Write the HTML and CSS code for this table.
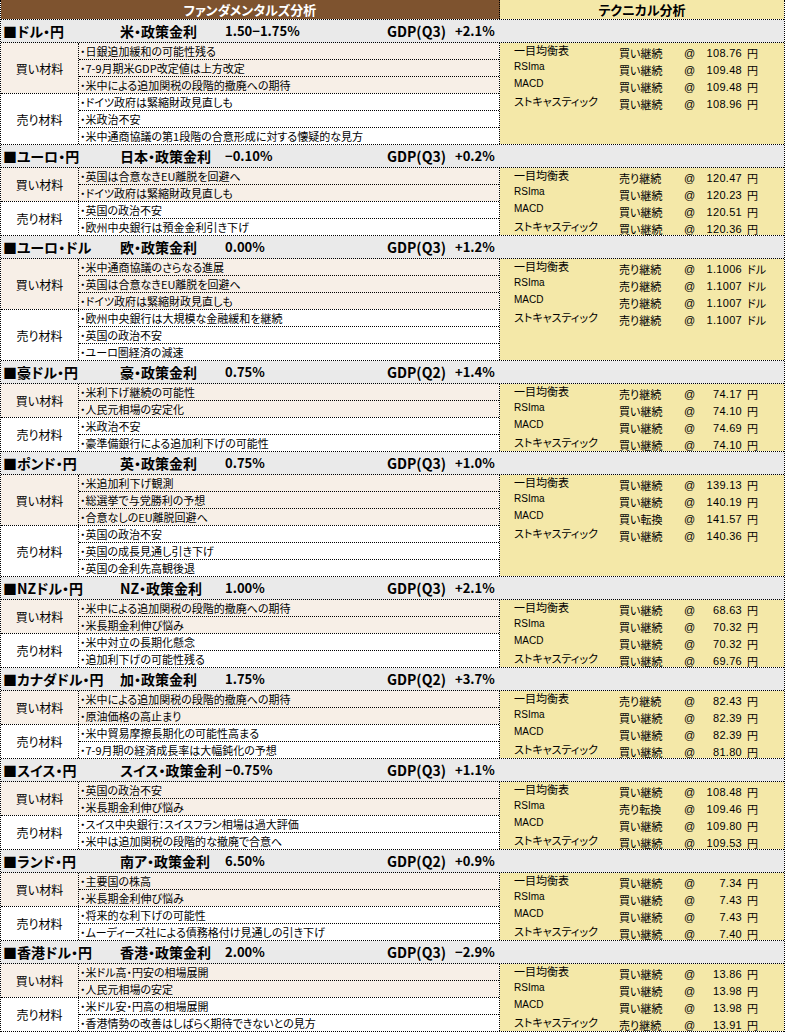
FILE: index.html
```html
<!DOCTYPE html>
<html lang="ja">
<head>
<meta charset="utf-8">
<title>ファンダメンタルズ分析</title>
<link rel="stylesheet" href="styles.css">
</head>
<body>
<div class="sheet">
  <div class="title-row">
    <div class="t-fund">ファンダメンタルズ分析</div>
    <div class="t-tech">テクニカル分析</div>
  </div>

  <section class="pair">
    <div class="pair-head"><span>■ドル・円</span><span>米・政策金利</span><span class="rate">1.50−1.75%</span><span>GDP(Q3)</span><span class="gdp">+2.1%</span></div>
    <div class="pair-body">
      <div class="fund">
        <div class="group buy"><div class="label">買い材料</div><div class="items">
          <div class="item">・日銀追加緩和の可能性残る</div>
          <div class="item">・7-9月期米GDP改定値は上方改定</div>
          <div class="item">・米中による追加関税の段階的撤廃への期待</div>
        </div></div>
        <div class="group sell"><div class="label">売り材料</div><div class="items">
          <div class="item">・ドイツ政府は緊縮財政見直しも</div>
          <div class="item">・米政治不安</div>
          <div class="item">・米中通商協議の第1段階の合意形成に対する懐疑的な見方</div>
        </div></div>
      </div>
      <div class="tech">
        <div class="tl"><span class="tn">一目均衡表</span><span class="ts">買い継続</span><span class="at">@</span><span class="tv">108.76</span><span class="tu">円</span></div>
        <div class="tl"><span class="tn lat">RSIma</span><span class="ts">買い継続</span><span class="at">@</span><span class="tv">109.48</span><span class="tu">円</span></div>
        <div class="tl"><span class="tn lat">MACD</span><span class="ts">買い継続</span><span class="at">@</span><span class="tv">109.48</span><span class="tu">円</span></div>
        <div class="tl"><span class="tn">ストキャスティック</span><span class="ts">買い継続</span><span class="at">@</span><span class="tv">108.96</span><span class="tu">円</span></div>
      </div>
    </div>
  </section>

  <section class="pair">
    <div class="pair-head"><span>■ユーロ・円</span><span>日本・政策金利</span><span class="rate">−0.10%</span><span>GDP(Q3)</span><span class="gdp">+0.2%</span></div>
    <div class="pair-body">
      <div class="fund">
        <div class="group buy"><div class="label">買い材料</div><div class="items">
          <div class="item">・英国は合意なきEU離脱を回避へ</div>
          <div class="item">・ドイツ政府は緊縮財政見直しも</div>
        </div></div>
        <div class="group sell"><div class="label">売り材料</div><div class="items">
          <div class="item">・英国の政治不安</div>
          <div class="item">・欧州中央銀行は預金金利引き下げ</div>
        </div></div>
      </div>
      <div class="tech">
        <div class="tl"><span class="tn">一目均衡表</span><span class="ts">売り継続</span><span class="at">@</span><span class="tv">120.47</span><span class="tu">円</span></div>
        <div class="tl"><span class="tn lat">RSIma</span><span class="ts">買い継続</span><span class="at">@</span><span class="tv">120.23</span><span class="tu">円</span></div>
        <div class="tl"><span class="tn lat">MACD</span><span class="ts">買い継続</span><span class="at">@</span><span class="tv">120.51</span><span class="tu">円</span></div>
        <div class="tl"><span class="tn">ストキャスティック</span><span class="ts">買い継続</span><span class="at">@</span><span class="tv">120.36</span><span class="tu">円</span></div>
      </div>
    </div>
  </section>

  <section class="pair">
    <div class="pair-head"><span>■ユーロ・ドル</span><span>欧・政策金利</span><span class="rate">0.00%</span><span>GDP(Q3)</span><span class="gdp">+1.2%</span></div>
    <div class="pair-body">
      <div class="fund">
        <div class="group buy"><div class="label">買い材料</div><div class="items">
          <div class="item">・米中通商協議のさらなる進展</div>
          <div class="item">・英国は合意なきEU離脱を回避へ</div>
          <div class="item">・ドイツ政府は緊縮財政見直しも</div>
        </div></div>
        <div class="group sell"><div class="label">売り材料</div><div class="items">
          <div class="item">・欧州中央銀行は大規模な金融緩和を継続</div>
          <div class="item">・英国の政治不安</div>
          <div class="item">・ユーロ圏経済の減速</div>
        </div></div>
      </div>
      <div class="tech">
        <div class="tl"><span class="tn">一目均衡表</span><span class="ts">売り継続</span><span class="at">@</span><span class="tv">1.1006</span><span class="tu">ドル</span></div>
        <div class="tl"><span class="tn lat">RSIma</span><span class="ts">売り継続</span><span class="at">@</span><span class="tv">1.1007</span><span class="tu">ドル</span></div>
        <div class="tl"><span class="tn lat">MACD</span><span class="ts">売り継続</span><span class="at">@</span><span class="tv">1.1007</span><span class="tu">ドル</span></div>
        <div class="tl"><span class="tn">ストキャスティック</span><span class="ts">売り継続</span><span class="at">@</span><span class="tv">1.1007</span><span class="tu">ドル</span></div>
      </div>
    </div>
  </section>

  <section class="pair">
    <div class="pair-head"><span>■豪ドル・円</span><span>豪・政策金利</span><span class="rate">0.75%</span><span>GDP(Q2)</span><span class="gdp">+1.4%</span></div>
    <div class="pair-body">
      <div class="fund">
        <div class="group buy"><div class="label">買い材料</div><div class="items">
          <div class="item">・米利下げ継続の可能性</div>
          <div class="item">・人民元相場の安定化</div>
        </div></div>
        <div class="group sell"><div class="label">売り材料</div><div class="items">
          <div class="item">・米政治不安</div>
          <div class="item">・豪準備銀行による追加利下げの可能性</div>
        </div></div>
      </div>
      <div class="tech">
        <div class="tl"><span class="tn">一目均衡表</span><span class="ts">売り継続</span><span class="at">@</span><span class="tv">74.17</span><span class="tu">円</span></div>
        <div class="tl"><span class="tn lat">RSIma</span><span class="ts">買い継続</span><span class="at">@</span><span class="tv">74.10</span><span class="tu">円</span></div>
        <div class="tl"><span class="tn lat">MACD</span><span class="ts">買い継続</span><span class="at">@</span><span class="tv">74.69</span><span class="tu">円</span></div>
        <div class="tl"><span class="tn">ストキャスティック</span><span class="ts">買い継続</span><span class="at">@</span><span class="tv">74.10</span><span class="tu">円</span></div>
      </div>
    </div>
  </section>

  <section class="pair">
    <div class="pair-head"><span>■ポンド・円</span><span>英・政策金利</span><span class="rate">0.75%</span><span>GDP(Q3)</span><span class="gdp">+1.0%</span></div>
    <div class="pair-body">
      <div class="fund">
        <div class="group buy"><div class="label">買い材料</div><div class="items">
          <div class="item">・米追加利下げ観測</div>
          <div class="item">・総選挙で与党勝利の予想</div>
          <div class="item">・合意なしのEU離脱回避へ</div>
        </div></div>
        <div class="group sell"><div class="label">売り材料</div><div class="items">
          <div class="item">・英国の政治不安</div>
          <div class="item">・英国の成長見通し引き下げ</div>
          <div class="item">・英国の金利先高観後退</div>
        </div></div>
      </div>
      <div class="tech">
        <div class="tl"><span class="tn">一目均衡表</span><span class="ts">買い継続</span><span class="at">@</span><span class="tv">139.13</span><span class="tu">円</span></div>
        <div class="tl"><span class="tn lat">RSIma</span><span class="ts">買い継続</span><span class="at">@</span><span class="tv">140.19</span><span class="tu">円</span></div>
        <div class="tl"><span class="tn lat">MACD</span><span class="ts">買い転換</span><span class="at">@</span><span class="tv">141.57</span><span class="tu">円</span></div>
        <div class="tl"><span class="tn">ストキャスティック</span><span class="ts">買い継続</span><span class="at">@</span><span class="tv">140.36</span><span class="tu">円</span></div>
      </div>
    </div>
  </section>

  <section class="pair">
    <div class="pair-head"><span>■NZドル・円</span><span>NZ・政策金利</span><span class="rate">1.00%</span><span>GDP(Q3)</span><span class="gdp">+2.1%</span></div>
    <div class="pair-body">
      <div class="fund">
        <div class="group buy"><div class="label">買い材料</div><div class="items">
          <div class="item">・米中による追加関税の段階的撤廃への期待</div>
          <div class="item">・米長期金利伸び悩み</div>
        </div></div>
        <div class="group sell"><div class="label">売り材料</div><div class="items">
          <div class="item">・米中対立の長期化懸念</div>
          <div class="item">・追加利下げの可能性残る</div>
        </div></div>
      </div>
      <div class="tech">
        <div class="tl"><span class="tn">一目均衡表</span><span class="ts">買い継続</span><span class="at">@</span><span class="tv">68.63</span><span class="tu">円</span></div>
        <div class="tl"><span class="tn lat">RSIma</span><span class="ts">買い継続</span><span class="at">@</span><span class="tv">70.32</span><span class="tu">円</span></div>
        <div class="tl"><span class="tn lat">MACD</span><span class="ts">買い継続</span><span class="at">@</span><span class="tv">70.32</span><span class="tu">円</span></div>
        <div class="tl"><span class="tn">ストキャスティック</span><span class="ts">買い継続</span><span class="at">@</span><span class="tv">69.76</span><span class="tu">円</span></div>
      </div>
    </div>
  </section>

  <section class="pair">
    <div class="pair-head"><span>■カナダドル・円</span><span>加・政策金利</span><span class="rate">1.75%</span><span>GDP(Q2)</span><span class="gdp">+3.7%</span></div>
    <div class="pair-body">
      <div class="fund">
        <div class="group buy"><div class="label">買い材料</div><div class="items">
          <div class="item">・米中による追加関税の段階的撤廃への期待</div>
          <div class="item">・原油価格の高止まり</div>
        </div></div>
        <div class="group sell"><div class="label">売り材料</div><div class="items">
          <div class="item">・米中貿易摩擦長期化の可能性高まる</div>
          <div class="item">・7-9月期の経済成長率は大幅鈍化の予想</div>
        </div></div>
      </div>
      <div class="tech">
        <div class="tl"><span class="tn">一目均衡表</span><span class="ts">売り継続</span><span class="at">@</span><span class="tv">82.43</span><span class="tu">円</span></div>
        <div class="tl"><span class="tn lat">RSIma</span><span class="ts">買い継続</span><span class="at">@</span><span class="tv">82.39</span><span class="tu">円</span></div>
        <div class="tl"><span class="tn lat">MACD</span><span class="ts">買い継続</span><span class="at">@</span><span class="tv">82.39</span><span class="tu">円</span></div>
        <div class="tl"><span class="tn">ストキャスティック</span><span class="ts">買い継続</span><span class="at">@</span><span class="tv">81.80</span><span class="tu">円</span></div>
      </div>
    </div>
  </section>

  <section class="pair">
    <div class="pair-head"><span>■スイス・円</span><span>スイス・政策金利</span><span class="rate">−0.75%</span><span>GDP(Q3)</span><span class="gdp">+1.1%</span></div>
    <div class="pair-body">
      <div class="fund">
        <div class="group buy"><div class="label">買い材料</div><div class="items">
          <div class="item">・英国の政治不安</div>
          <div class="item">・米長期金利伸び悩み</div>
        </div></div>
        <div class="group sell"><div class="label">売り材料</div><div class="items">
          <div class="item">・スイス中央銀行：スイスフラン相場は過大評価</div>
          <div class="item">・米中は追加関税の段階的な撤廃で合意へ</div>
        </div></div>
      </div>
      <div class="tech">
        <div class="tl"><span class="tn">一目均衡表</span><span class="ts">買い継続</span><span class="at">@</span><span class="tv">108.48</span><span class="tu">円</span></div>
        <div class="tl"><span class="tn lat">RSIma</span><span class="ts">売り転換</span><span class="at">@</span><span class="tv">109.46</span><span class="tu">円</span></div>
        <div class="tl"><span class="tn lat">MACD</span><span class="ts">買い継続</span><span class="at">@</span><span class="tv">109.80</span><span class="tu">円</span></div>
        <div class="tl"><span class="tn">ストキャスティック</span><span class="ts">買い継続</span><span class="at">@</span><span class="tv">109.53</span><span class="tu">円</span></div>
      </div>
    </div>
  </section>

  <section class="pair">
    <div class="pair-head"><span>■ランド・円</span><span>南ア・政策金利</span><span class="rate">6.50%</span><span>GDP(Q2)</span><span class="gdp">+0.9%</span></div>
    <div class="pair-body">
      <div class="fund">
        <div class="group buy"><div class="label">買い材料</div><div class="items">
          <div class="item">・主要国の株高</div>
          <div class="item">・米長期金利伸び悩み</div>
        </div></div>
        <div class="group sell"><div class="label">売り材料</div><div class="items">
          <div class="item">・将来的な利下げの可能性</div>
          <div class="item">・ムーディーズ社による債務格付け見通しの引き下げ</div>
        </div></div>
      </div>
      <div class="tech">
        <div class="tl"><span class="tn">一目均衡表</span><span class="ts">買い継続</span><span class="at">@</span><span class="tv">7.34</span><span class="tu">円</span></div>
        <div class="tl"><span class="tn lat">RSIma</span><span class="ts">買い継続</span><span class="at">@</span><span class="tv">7.43</span><span class="tu">円</span></div>
        <div class="tl"><span class="tn lat">MACD</span><span class="ts">買い継続</span><span class="at">@</span><span class="tv">7.43</span><span class="tu">円</span></div>
        <div class="tl"><span class="tn">ストキャスティック</span><span class="ts">買い継続</span><span class="at">@</span><span class="tv">7.40</span><span class="tu">円</span></div>
      </div>
    </div>
  </section>

  <section class="pair">
    <div class="pair-head"><span>■香港ドル・円</span><span>香港・政策金利</span><span class="rate">2.00%</span><span>GDP(Q3)</span><span class="gdp">−2.9%</span></div>
    <div class="pair-body">
      <div class="fund">
        <div class="group buy"><div class="label">買い材料</div><div class="items">
          <div class="item">・米ドル高・円安の相場展開</div>
          <div class="item">・人民元相場の安定</div>
        </div></div>
        <div class="group sell"><div class="label">売り材料</div><div class="items">
          <div class="item">・米ドル安・円高の相場展開</div>
          <div class="item">・香港情勢の改善はしばらく期待できないとの見方</div>
        </div></div>
      </div>
      <div class="tech">
        <div class="tl"><span class="tn">一目均衡表</span><span class="ts">買い継続</span><span class="at">@</span><span class="tv">13.86</span><span class="tu">円</span></div>
        <div class="tl"><span class="tn lat">RSIma</span><span class="ts">買い継続</span><span class="at">@</span><span class="tv">13.98</span><span class="tu">円</span></div>
        <div class="tl"><span class="tn lat">MACD</span><span class="ts">買い継続</span><span class="at">@</span><span class="tv">13.98</span><span class="tu">円</span></div>
        <div class="tl"><span class="tn">ストキャスティック</span><span class="ts">売り継続</span><span class="at">@</span><span class="tv">13.91</span><span class="tu">円</span></div>
      </div>
    </div>
  </section>
</div>
</body>
</html>
```
FILE: styles.css
```css
html, body {
  margin: 0;
  padding: 0;
  background: #ffffff;
}
body {
  font-family: "Noto Sans CJK JP", "Noto Sans", sans-serif;
  font-feature-settings: "palt";
  color: #000;
}
.sheet {
  width: 785px;
  box-sizing: border-box;
  border-left: 1px dotted #000;
  border-right: 1px dotted #000;
}
.title-row {
  display: flex;
  height: 20px;
  box-sizing: border-box;
  border-bottom: 1px dotted #000;
  font-size: 13px;
  font-weight: bold;
  line-height: 19px;
  text-align: center;
}
.t-fund {
  width: 498px;
  background: #7e532f;
  color: #fff;
  border-right: 1px dotted #000;
}
.t-tech {
  flex: 1;
  background: #f4e8a8;
}
.pair-head {
  display: grid;
  grid-template-columns: 117px 101px 166px 68px 1fr;
  height: 23px;
  box-sizing: border-box;
  padding-left: 2px;
  background: #eaeaea;
  border-bottom: 1px dotted #000;
  font-size: 14px;
  font-weight: bold;
  line-height: 22px;
  white-space: nowrap;
}
.pair-head .rate {
  font-size: 13px;
  padding-left: 4px;
}
.pair-head .gdp {
  font-size: 13px;
}
.pair-body {
  display: flex;
  border-bottom: 1px dotted #000;
}
.fund {
  width: 498px;
  border-right: 1px dotted #000;
}
.group {
  display: flex;
}
.group + .group {
  border-top: 1px dotted #000;
}
.buy {
  background: #f7efe7;
}
.sell {
  background: #fff;
}
.label {
  width: 77px;
  border-right: 1px dotted #000;
  display: flex;
  align-items: center;
  justify-content: center;
  font-size: 12px;
}
.items {
  flex: 1;
}
.item {
  height: 16px;
  line-height: 16px;
  font-size: 11px;
  padding-left: 1px;
  white-space: nowrap;
}
.item + .item {
  border-top: 1px dotted #000;
}
.tech {
  flex: 1;
  background: #f4e8a8;
  padding-left: 14px;
}
.tl {
  display: grid;
  grid-template-columns: 105px 65px 12px 46px auto;
  height: 17px;
  font-size: 11px;
  line-height: 14px;
  white-space: nowrap;
}
.tl:last-child {
  height: 16px;
}
.tn {
  align-self: start;
}
.tn.lat {
  font-family: "Liberation Sans", sans-serif;
  font-size: 10px;
}
.ts, .at, .tv, .tu {
  align-self: end;
}
.tl:last-child .ts, .tl:last-child .at, .tl:last-child .tv, .tl:last-child .tu {
  margin-bottom: -1px;
}
.at, .tv {
  font-family: "Liberation Sans", sans-serif;
}
.tv {
  text-align: right;
  letter-spacing: 0.3px;
}
.tu {
  padding-left: 5px;
}
```
